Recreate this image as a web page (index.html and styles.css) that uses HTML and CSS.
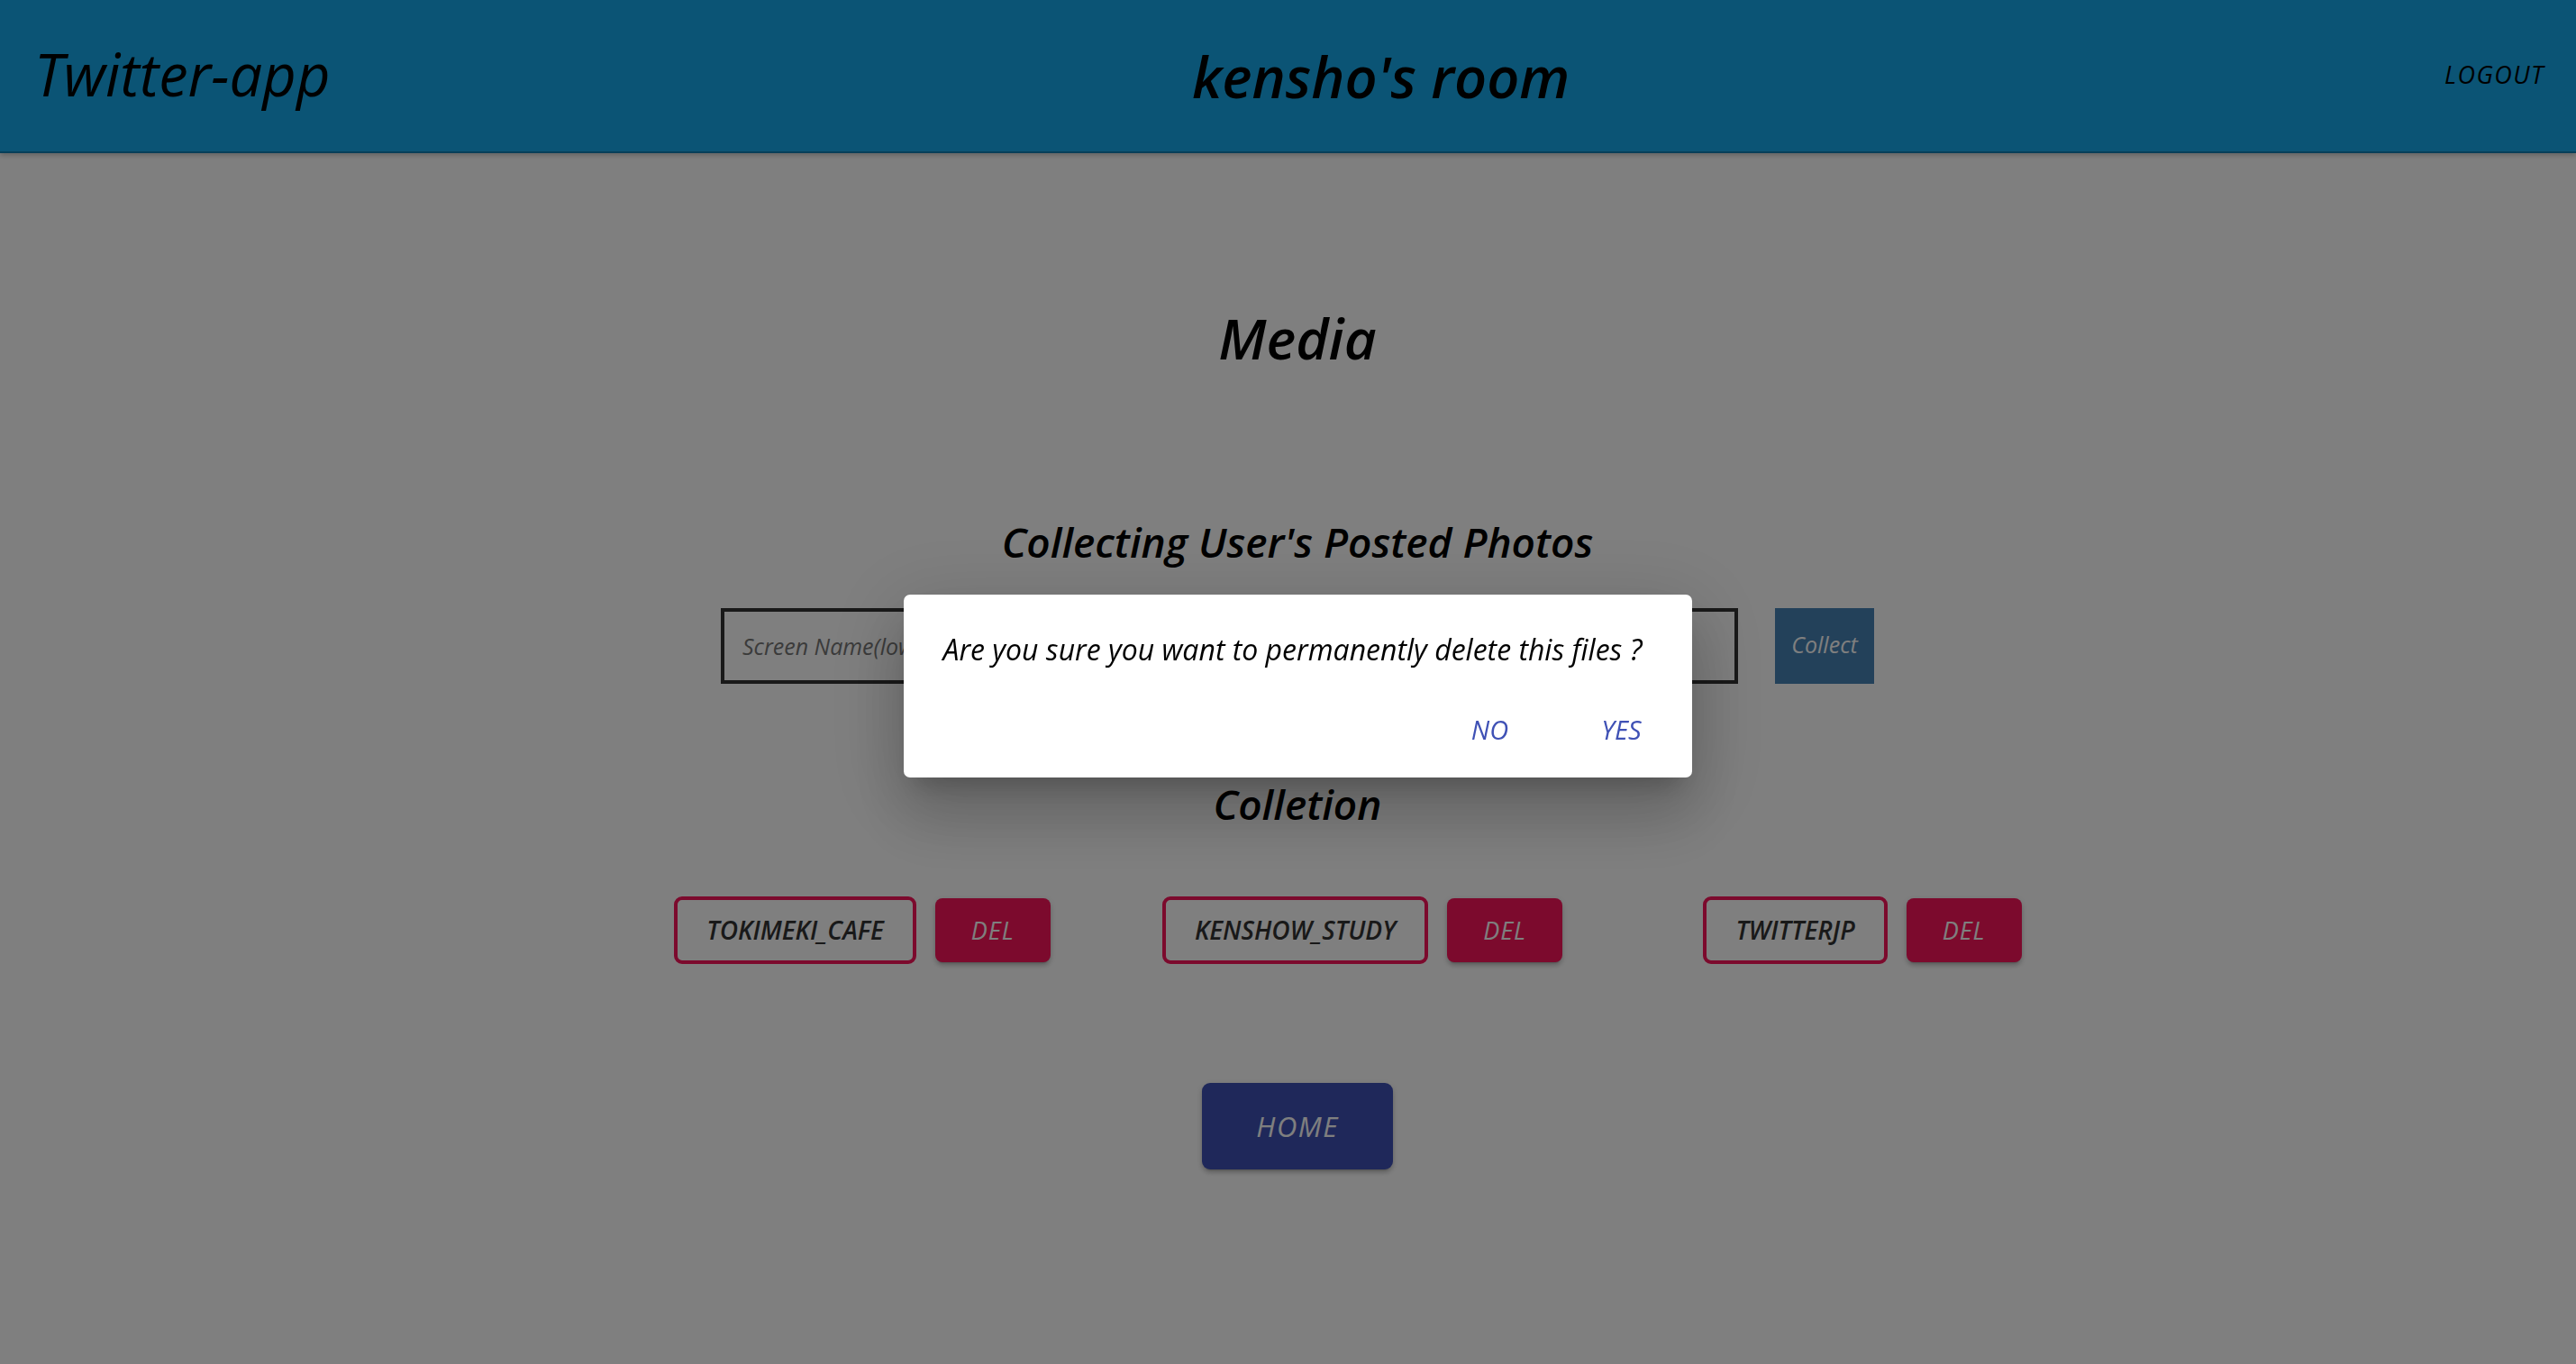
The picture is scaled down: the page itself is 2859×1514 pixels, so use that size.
FILE: index.html
```html
<!DOCTYPE html>
<html lang="en">
<head>
    <meta charset="UTF-8">
    <meta name="viewport" content="width=device-width, initial-scale=1.0">
    <title>Twitter-app - Media</title>
    <link rel="stylesheet" href="styles.css">
</head>
<body>

    <!-- App bar -->
    <header class="app-bar">
        <h1 class="app-title">Twitter-app</h1>
        <h2 class="room-title">kensho's room</h2>
        <button class="logout-btn">Logout</button>
    </header>

    <!-- Main content -->
    <main class="page">
        <h2 class="page-title">Media</h2>

        <h3 class="section-title">Collecting User's Posted Photos</h3>
        <form class="collect-form">
            <input type="text" class="screen-name" placeholder="Screen Name(lowercase)">
            <button type="submit" class="collect-btn">Collect</button>
        </form>

        <h3 class="section-title collection-title">Colletion</h3>
        <div class="collection-list">
            <div class="collection-item">
                <span class="chip">tokimeki_cafe</span>
                <button class="del-btn">Del</button>
            </div>
            <div class="collection-item">
                <span class="chip">kenshow_study</span>
                <button class="del-btn">Del</button>
            </div>
            <div class="collection-item">
                <span class="chip">twitterjp</span>
                <button class="del-btn">Del</button>
            </div>
        </div>

        <button class="home-btn">Home</button>
    </main>

    <!-- Delete confirmation -->
    <div class="backdrop"></div>
    <div class="dialog-wrap">
        <div class="dialog" role="dialog">
            <p class="dialog-text">Are you sure you want to permanently delete this files ?</p>
            <div class="dialog-actions">
                <button class="text-btn">No</button>
                <button class="text-btn">Yes</button>
            </div>
        </div>
    </div>

</body>
</html>
```

FILE: styles.css
```css
/* Reset */
* {
    margin: 0;
    padding: 0;
    box-sizing: border-box;
}

body {
    font-family: "Open Sans", "Noto Sans", sans-serif;
    font-style: italic;
    background-color: #fff;
    color: #000;
    height: 100vh;
    overflow: hidden;
}

button,
input {
    font-family: inherit;
    font-style: italic;
}

/* App bar */
.app-bar {
    height: 170px;
    background-color: #16a8ea;
    display: flex;
    align-items: center;
    padding: 0 21px 0 38px;
    border-bottom: 2px solid #0f7fb3;
    box-shadow: 0 3px 5px rgba(0, 0, 0, 0.2);
}

.app-title {
    font-size: 65px;
    font-weight: 400;
    line-height: 1.2;
    margin-top: -5px;
}

.room-title {
    flex-grow: 1;
    text-align: center;
    font-size: 63px;
    font-weight: 600;
    line-height: 1.2;
    margin-top: 2px;
}

.logout-btn {
    background: none;
    border: none;
    font-size: 27px;
    letter-spacing: 1.5px;
    text-transform: uppercase;
    padding: 10px 14px;
    margin-top: -4px;
    color: #000;
}

/* Main content */
.page {
    display: flex;
    flex-direction: column;
    align-items: center;
    padding: 168px 0 0 21px;
}

.page-title {
    font-size: 62px;
    font-weight: 600;
    line-height: 1.2;
}

.section-title {
    font-size: 46px;
    font-weight: 600;
    line-height: 1.2;
    margin-top: 162px;
}

/* Collect form */
.collect-form {
    display: flex;
    gap: 41px;
    margin-top: 45px;
}

.screen-name {
    width: 1129px;
    height: 84px;
    border: 4px solid #333;
    padding: 0 20px;
    font-size: 25px;
    outline: none;
}

.screen-name::placeholder {
    color: #777;
}

.collect-btn {
    width: 110px;
    height: 84px;
    background-color: #4682b4;
    color: #fff;
    border: none;
    font-size: 25px;
    padding-bottom: 4px;
}

.collection-title {
    margin-top: 106px;
}

/* Collection list */
.collection-list {
    display: grid;
    grid-template-columns: repeat(3, 555px);
    margin-top: 75px;
    padding-left: 144px;
}

.collection-item {
    display: flex;
    align-items: center;
    justify-content: center;
    gap: 21px;
}

.chip {
    height: 75px;
    display: flex;
    align-items: center;
    padding: 0 32px;
    border: 4px solid #f8145a;
    border-radius: 9px;
    font-size: 28px;
    font-weight: 600;
    text-transform: uppercase;
    color: #333;
}

.del-btn {
    width: 128px;
    height: 71px;
    background-color: #f8145a;
    color: #fff;
    border: none;
    border-radius: 8px;
    font-size: 27px;
    letter-spacing: 1px;
    text-transform: uppercase;
    box-shadow: 0 5px 2px -4px rgba(0, 0, 0, 0.2), 0 4px 4px rgba(0, 0, 0, 0.14), 0 2px 9px rgba(0, 0, 0, 0.12);
}

.home-btn {
    width: 212px;
    height: 96px;
    margin-top: 132px;
    background-color: #3f51b5;
    color: #fff;
    border: none;
    border-radius: 9px;
    font-size: 31px;
    letter-spacing: 1.5px;
    text-transform: uppercase;
    box-shadow: 0 5px 2px -4px rgba(0, 0, 0, 0.2), 0 4px 4px rgba(0, 0, 0, 0.14), 0 2px 9px rgba(0, 0, 0, 0.12);
}

/* Dialog */
.backdrop {
    position: fixed;
    inset: 0;
    background-color: rgba(0, 0, 0, 0.5);
}

.dialog-wrap {
    position: fixed;
    inset: 0;
    display: flex;
    align-items: center;
    justify-content: center;
    padding: 8px 0 0 21px;
}

.dialog {
    width: 875px;
    background-color: #fff;
    border-radius: 7px;
    box-shadow: 0 20px 27px -13px rgba(0, 0, 0, 0.2), 0 44px 69px 5px rgba(0, 0, 0, 0.14), 0 16px 84px 15px rgba(0, 0, 0, 0.12);
}

.dialog-text {
    font-size: 32px;
    line-height: 1.5;
    padding: 37px 44px 22px;
    color: #000;
}

.dialog-actions {
    display: flex;
    justify-content: flex-end;
    gap: 22px;
    padding: 10px 16px 20px;
}

.text-btn {
    min-width: 124px;
    height: 66px;
    background: none;
    border: none;
    color: #3f51b5;
    font-size: 29px;
    text-transform: uppercase;
}
```
